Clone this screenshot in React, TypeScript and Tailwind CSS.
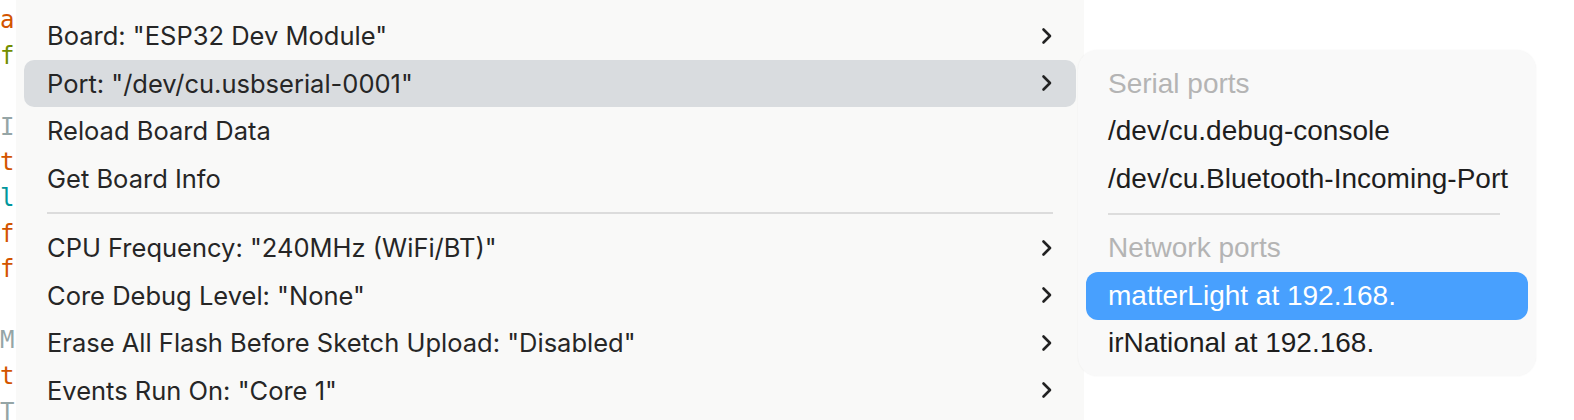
import React from "react";

const codeLetters: { ch: string; color: string }[] = [
  { ch: "a", color: "text-[#d35400]" },
  { ch: "f", color: "text-[#728e00]" },
  { ch: " ", color: "" },
  { ch: "I", color: "text-[#95a5a6]" },
  { ch: "t", color: "text-[#d35400]" },
  { ch: "l", color: "text-[#00979c]" },
  { ch: "f", color: "text-[#d35400]" },
  { ch: "f", color: "text-[#d35400]" },
  { ch: " ", color: "" },
  { ch: "M", color: "text-[#95a5a6]" },
  { ch: "t", color: "text-[#d35400]" },
  { ch: "T", color: "text-[#95a5a6]" },
];

function Chevron({ className = "" }: { className?: string }) {
  return (
    <svg width="12" height="18" viewBox="0 0 12 18" className={className}>
      <path d="M2.5 2.5 L9 9 L2.5 15.5" fill="none" stroke="#222" strokeWidth="2.6" strokeLinecap="round" strokeLinejoin="round" />
    </svg>
  );
}

function MenuRow({ label, active = false }: { label: string; active?: boolean }) {
  return (
    <div className={`mx-[8px] h-[47.5px] flex items-center justify-between pl-[23px] pr-[23px] rounded-[10px] ${active ? "bg-[#d9dcdf]" : ""}`}>
      <span className="text-[25.5px] text-[#262626] leading-none">{label}</span>
      <Chevron />
    </div>
  );
}

function PlainRow({ label }: { label: string }) {
  return (
    <div className="mx-[8px] h-[47.5px] flex items-center pl-[23px] rounded-[10px]">
      <span className="text-[25.5px] text-[#262626] leading-none">{label}</span>
    </div>
  );
}

function SubRow({ label, kind }: { label: string; kind: "header" | "item" | "active" }) {
  const base = "mx-[8px] h-[47.5px] flex items-center pl-[22px] rounded-[12px]";
  if (kind === "header") {
    return (
      <div className={base}>
        <span className="text-[28px] text-[#b4b4b4] leading-none">{label}</span>
      </div>
    );
  }
  if (kind === "active") {
    return (
      <div className={`${base} bg-[#48a0fe]`}>
        <span className="text-[28px] text-white leading-none">{label}</span>
      </div>
    );
  }
  return (
    <div className={base}>
      <span className="text-[28px] text-[#1e1e1e] leading-none">{label}</span>
    </div>
  );
}

export default function App() {
  return (
    <div className="relative w-[1574px] h-[420px] overflow-hidden bg-white flex" style={{ fontFamily: "Inter, 'Liberation Sans', sans-serif" }}>
      <div className="w-[16px] shrink-0 overflow-hidden bg-white pt-[3px]" style={{ fontFamily: "'DejaVu Sans Mono', monospace" }}>
        {codeLetters.map((l, i) => (
          <div key={i} className={`h-[35.6px] leading-[35.6px] text-[24px] whitespace-pre ${l.color}`}>
            {l.ch}
          </div>
        ))}
      </div>
      <div className="w-[1068px] shrink-0 h-[420px] bg-[#f9f9f8] pt-[12px]">
        <MenuRow label={'Board: "ESP32 Dev Module"'} />
        <MenuRow label={'Port: "/dev/cu.usbserial-0001"'} active />
        <PlainRow label="Reload Board Data" />
        <PlainRow label="Get Board Info" />
        <div className="h-[22px] flex items-center pl-[31px] pr-[31px]">
          <div className="h-[2px] w-full bg-[#dcdcdc]" />
        </div>
        <MenuRow label={'CPU Frequency: "240MHz (WiFi/BT)"'} />
        <MenuRow label={'Core Debug Level: "None"'} />
        <MenuRow label={'Erase All Flash Before Sketch Upload: "Disabled"'} />
        <MenuRow label={'Events Run On: "Core 1"'} />
      </div>
      <div className="flex-1 bg-white" />
      <div
        className="absolute left-[1078px] top-[50px] w-[458px] h-[326px] rounded-[20px] bg-[#f9f9f9] shadow-[0_0_2px_rgba(0,0,0,0.06)] pt-[10px]"
        style={{ fontFamily: "'Liberation Sans', sans-serif" }}
      >
        <SubRow label="Serial ports" kind="header" />
        <SubRow label="/dev/cu.debug-console" kind="item" />
        <SubRow label="/dev/cu.Bluetooth-Incoming-Port" kind="item" />
        <div className="h-[22px] flex items-center pl-[30px] pr-[36px]">
          <div className="h-[2px] w-full bg-[#dddddd]" />
        </div>
        <SubRow label="Network ports" kind="header" />
        <SubRow label="matterLight at 192.168." kind="active" />
        <SubRow label="irNational at 192.168." kind="item" />
      </div>
    </div>
  );
}
